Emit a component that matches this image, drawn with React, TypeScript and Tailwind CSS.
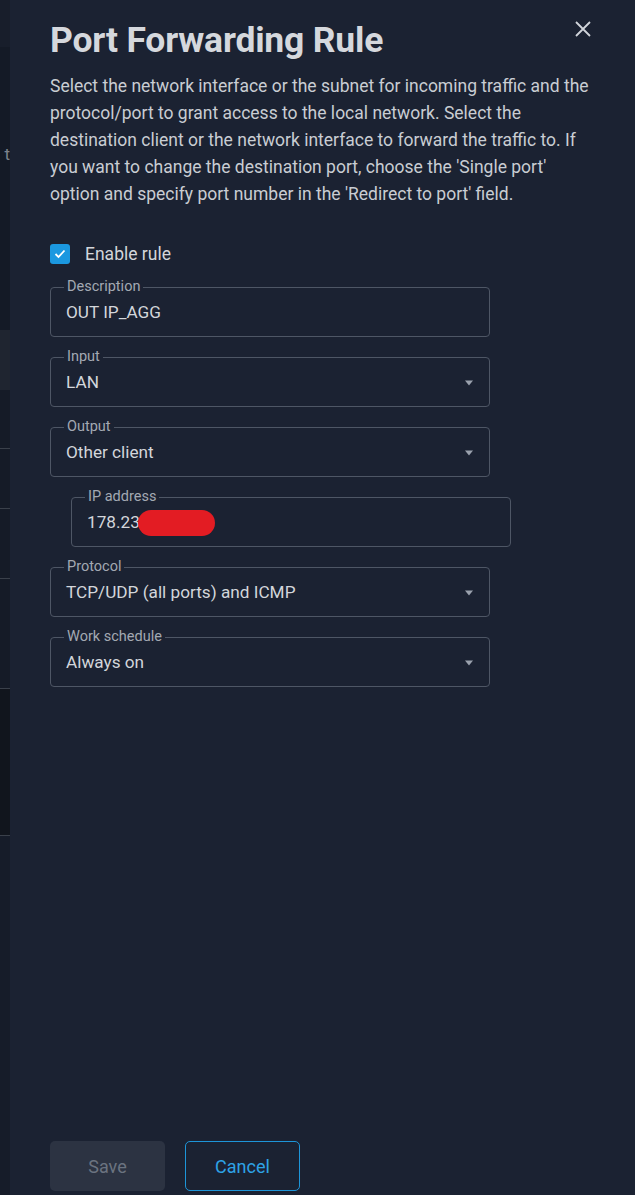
import React from "react";

const font = { fontFamily: "Roboto, 'Noto Sans', Arial, sans-serif" };

function Arrow() {
  return (
    <svg width="10" height="6" viewBox="0 0 10 6" className="shrink-0">
      <path d="M1 0.5 L9 0.5 L5 5.5 Z" fill="#9aa1ad" />
    </svg>
  );
}

function Field({
  label,
  value,
  select,
  children,
  className = "",
}: {
  label: string;
  value?: string;
  select?: boolean;
  children?: React.ReactNode;
  className?: string;
}) {
  return (
    <div
      className={`relative h-[50px] rounded-[4px] border border-[#4e5665] pl-[15px] pr-[15px] flex items-center ${className}`}
    >
      <span className="absolute left-[13px] top-[-9px] px-[3px] bg-[#1b2232] text-[14.5px] leading-[16px] text-[#a3a9b3]">
        {label}
      </span>
      <div className="flex items-center justify-between w-full pt-[2px]">
        <div className="text-[17.2px] text-[#d3d6db] flex items-center">
          {value}
          {children}
        </div>
        {select && <Arrow />}
      </div>
    </div>
  );
}

export default function App() {
  return (
    <div className="w-[635px] h-[1195px] flex overflow-hidden bg-[#1b2232]" style={font}>
      {/* background page strip */}
      <div className="w-[10px] flex flex-col shrink-0 overflow-hidden">
        <div className="h-[47px] bg-[#181e2b]" />
        <div className="h-[283px] bg-[#141a26] relative overflow-hidden">
          <span className="absolute right-0 top-[97px] text-[17px] leading-[20px] text-[#7d838d]">t</span>
        </div>
        <div className="h-[60px] bg-[#1f2530]" />
        <div className="h-[59px] bg-[#151b27] border-b border-[#3a404a]" />
        <div className="h-[60px] bg-[#151b27] border-b border-[#3a404a]" />
        <div className="h-[70px] bg-[#151b27] border-b border-[#3a404a]" />
        <div className="h-[110px] bg-[#151b27] border-b border-[#3a404a]" />
        <div className="h-[147px] bg-[#11151d] border-b border-[#3a404a]" />
        <div className="flex-1 bg-[#161c29]" />
      </div>

      {/* dialog */}
      <div className="flex-1 relative flex flex-col pl-[40px]">
        <button className="absolute right-[44px] top-[21px] text-[#cfd3d9]">
          <svg width="16" height="16" viewBox="0 0 16 16">
            <path d="M1 1 L15 15 M15 1 L1 15" stroke="#d0d4da" strokeWidth="1.8" />
          </svg>
        </button>

        <h1 className="mt-[19px] text-[35.5px] leading-[42px] font-bold text-[#d5d8dd] tracking-[-0.2px]">
          Port Forwarding Rule
        </h1>

        <p className="mt-[12px] w-[545px] text-[17.5px] leading-[27px] text-[#c9cdd3]">
          Select the network interface or the subnet for incoming traffic and the protocol/port to
          grant access to the local network. Select the destination client or the network interface
          to forward the traffic to. If you want to change the destination port, choose the 'Single
          port' option and specify port number in the 'Redirect to port' field.
        </p>

        <label className="mt-[34px] flex items-center gap-[15px] h-[24px]">
          <span className="w-[20px] h-[20px] rounded-[3px] bg-[#1b98e0] flex items-center justify-center">
            <svg width="12" height="10" viewBox="0 0 12 10">
              <path d="M1.5 5 L4.5 8 L10.5 1.5" stroke="#ffffff" strokeWidth="1.8" fill="none" />
            </svg>
          </span>
          <span className="text-[17.5px] text-[#d3d6db]">Enable rule</span>
        </label>

        <div className="mt-[21px] flex flex-col gap-[20px] w-[440px]">
          <Field label="Description" value="OUT IP_AGG" />
          <Field label="Input" value="LAN" select />
          <Field label="Output" value="Other client" select />
          <div className="flex items-end gap-[21px]">
            <div className="w-px h-[50px] bg-[#4e5665]" />
            <Field label="IP address" value="178.23" className="flex-1 min-w-[440px]">
              <span className="ml-[-2px] inline-block w-[77px] h-[26px] rounded-full bg-[#e31c23]" />
            </Field>
          </div>
          <Field label="Protocol" value="TCP/UDP (all ports) and ICMP" select />
          <Field label="Work schedule" value="Always on" select />
        </div>

        <div className="flex-1" />

        <div className="mb-[4px] flex gap-[20px]">
          <button className="w-[115px] h-[50px] rounded-[5px] bg-[#2c3342] text-[18px] text-[#6b7380]">
            Save
          </button>
          <button className="w-[115px] h-[50px] rounded-[5px] border border-[#1d95d8] text-[18px] text-[#2ea3e6]">
            Cancel
          </button>
        </div>
      </div>
    </div>
  );
}
